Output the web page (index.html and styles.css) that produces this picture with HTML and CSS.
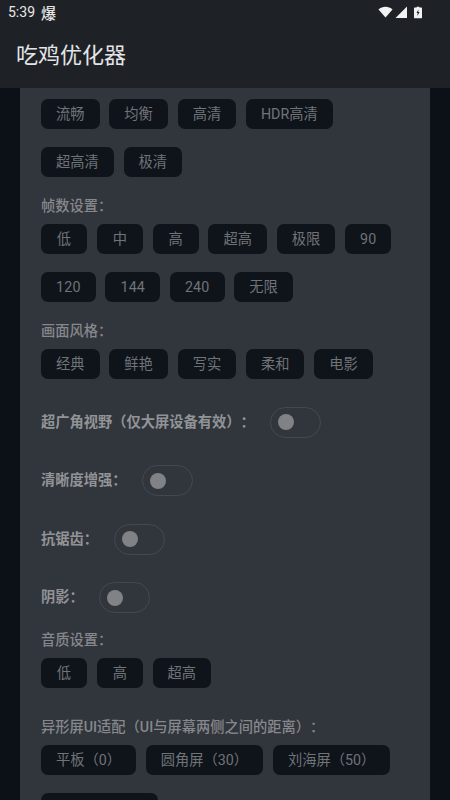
FILE: index.html
```html
<!DOCTYPE html>
<html lang="zh-CN">
<head>
<meta charset="utf-8">
<title>吃鸡优化器</title>
<link rel="stylesheet" href="styles.css">
</head>
<body>
<div class="app">
  <header class="topbar">
    <div class="status">
      <span class="time">5:39</span>
      <span class="notif">爆</span>
      <span class="status-icons">
        <svg class="ic-wifi" viewBox="0 0 16 12"><path d="M0.5 3.2C2.6 1.4 5.2 0.4 8 0.4s5.4 1 7.5 2.8L8 11.8z"/></svg>
        <svg class="ic-signal" viewBox="0 0 12 12"><path d="M12 0.5V12H0.5z"/></svg>
        <svg class="ic-battery" viewBox="0 0 9 13"><path fill-rule="evenodd" d="M3 0h3v1h2.4c.3 0 .6.3.6.6v10.8c0 .3-.3.6-.6.6H.6c-.3 0-.6-.3-.6-.6V1.600c0-.3.3-.6.6-.6H3zM5 3 2.800 7h1.400L3.700 10.500 6.300 6H4.800z"/></svg>
      </span>
    </div>
    <h1 class="title">吃鸡优化器</h1>
  </header>
  <main class="page">
    <div class="card">
      <div class="chips">
        <span class="chip">流畅</span><span class="chip">均衡</span><span class="chip">高清</span><span class="chip">HDR高清</span><span class="chip">超高清</span><span class="chip">极清</span>
      </div>
      <div class="label">帧数设置：</div>
      <div class="chips">
        <span class="chip">低</span><span class="chip">中</span><span class="chip">高</span><span class="chip">超高</span><span class="chip">极限</span><span class="chip num">90</span><span class="chip num">120</span><span class="chip num">144</span><span class="chip num">240</span><span class="chip">无限</span>
      </div>
      <div class="label">画面风格：</div>
      <div class="chips">
        <span class="chip">经典</span><span class="chip">鲜艳</span><span class="chip">写实</span><span class="chip">柔和</span><span class="chip">电影</span>
      </div>
      <div class="toggles">
        <div class="toggle-row"><span class="toggle-label">超广角视野（仅大屏设备有效）：</span><span class="switch"><span class="thumb"></span></span></div>
        <div class="toggle-row"><span class="toggle-label">清晰度增强：</span><span class="switch"><span class="thumb"></span></span></div>
        <div class="toggle-row"><span class="toggle-label">抗锯齿：</span><span class="switch"><span class="thumb"></span></span></div>
        <div class="toggle-row"><span class="toggle-label">阴影：</span><span class="switch"><span class="thumb"></span></span></div>
      </div>
      <div class="label label-audio">音质设置：</div>
      <div class="chips">
        <span class="chip">低</span><span class="chip">高</span><span class="chip">超高</span>
      </div>
      <div class="label label-notch">异形屏UI适配（UI与屏幕两侧之间的距离）：</div>
      <div class="chips">
        <span class="chip">平板（0）</span><span class="chip">圆角屏（30）</span><span class="chip">刘海屏（50）</span><span class="chip chip-clipped"></span>
      </div>
    </div>
  </main>
</div>
</body>
</html>
```
FILE: styles.css
```css
* { box-sizing: border-box; }
html, body { margin: 0; padding: 0; }
body {
  width: 450px;
  height: 800px;
  overflow: hidden;
  background: #0c1118;
  font-family: Roboto, "Noto Sans CJK SC", sans-serif;
  text-spacing-trim: space-all;
}
.app {
  display: flex;
  flex-direction: column;
  height: 800px;
  overflow: hidden;
}
.topbar {
  flex: none;
  height: 88px;
  background: #1e2227;
  color: #e4e5e6;
}
.status {
  display: flex;
  align-items: center;
  height: 24px;
  padding: 0 28px 0 8px;
  margin-bottom: 8px;
  color: #e8e8e8;
}
.time { font-size: 14px; }
.notif { font-size: 15px; margin-left: 6px; font-weight: 500; }
.status-icons {
  display: flex;
  align-items: center;
  margin-left: auto;
}
.status-icons svg { display: block; fill: #f2f2f2; }
.ic-wifi { width: 15px; height: 12px; }
.ic-signal { width: 12px; height: 12px; margin-left: 2px; }
.ic-battery { width: 8px; height: 13px; margin-left: 7px; }
.title {
  margin: 0;
  padding-left: 16px;
  font-size: 22px;
  font-weight: 400;
  line-height: 48px;
}
.page {
  flex: 1;
  padding: 0 20px;
  overflow: hidden;
}
.card {
  background: #31353c;
  padding: 11px 21px 0;
  min-height: 100%;
}
.chips {
  display: flex;
  flex-wrap: wrap;
  gap: 18px 9.8px;
}
.chip {
  display: flex;
  align-items: center;
  justify-content: center;
  height: 30px;
  min-width: 46px;
  padding: 0 15px;
  border-radius: 7px;
  background: #0f141b;
  color: #707377;
  font-size: 14.25px;
  line-height: 1;
  white-space: nowrap;
}
.num { letter-spacing: 0.2px; }
.chip-clipped { width: 117px; }
.label {
  margin: 19px 0 8px;
  height: 20px;
  line-height: 20px;
  font-size: 14.25px;
  font-weight: 500;
  color: #86888c;
}
.label-audio { margin-top: 17px; }
.label-notch { margin-top: 29px; }
.toggles {
  display: flex;
  flex-direction: column;
  gap: 27.5px;
  margin-top: 27.5px;
}
.toggle-row {
  display: flex;
  align-items: center;
  gap: 15.5px;
  height: 31px;
}
.toggle-label {
  font-size: 14.25px;
  line-height: 1;
  font-weight: 700;
  color: #919397;
}
.switch {
  display: flex;
  align-items: center;
  width: 51px;
  height: 31px;
  padding-left: 7px;
  border: 1.5px solid #45494f;
  border-radius: 16px;
}
.thumb {
  width: 16px;
  height: 16px;
  border-radius: 50%;
  background: #808285;
}
```
